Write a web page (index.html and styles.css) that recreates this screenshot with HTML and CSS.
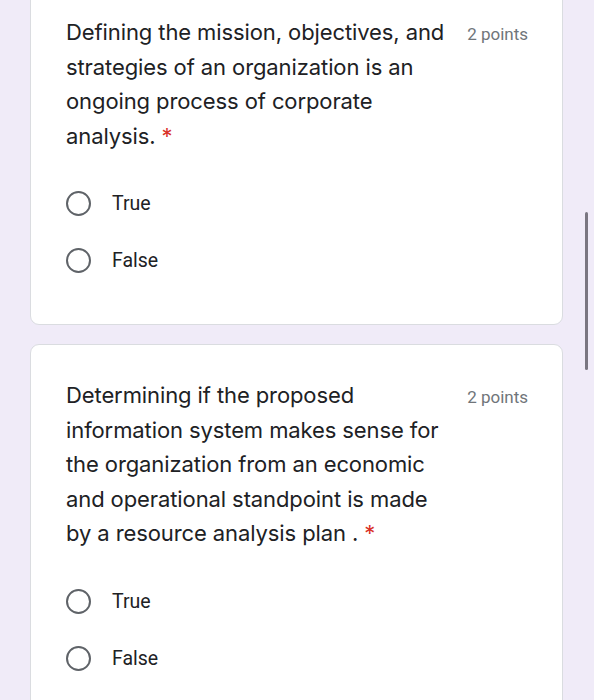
FILE: index.html
```html
<!DOCTYPE html>
<html>
<head>
<meta charset="utf-8">
<link rel="stylesheet" href="styles.css">
</head>
<body>
<div class="page">
  <div class="card card-first">
    <div class="head">
      <div class="title"><span class="qtext">Defining the mission, objectives, and strategies of an organization is an ongoing process of corporate analysis.</span>&nbsp;<span class="req">*</span></div>
      <div class="points">2 points</div>
    </div>
    <div class="options">
      <div class="option"><span class="radio"></span><span class="label">True</span></div>
      <div class="option"><span class="radio"></span><span class="label">False</span></div>
    </div>
  </div>
  <div class="card">
    <div class="head">
      <div class="title"><span class="qtext">Determining if the proposed information system makes sense for the organization from an economic and operational standpoint is made by a resource analysis plan .</span>&nbsp;<span class="req">*</span></div>
      <div class="points">2 points</div>
    </div>
    <div class="options">
      <div class="option"><span class="radio"></span><span class="label">True</span></div>
      <div class="option"><span class="radio"></span><span class="label">False</span></div>
    </div>
  </div>
</div>
<div class="scrollbar"></div>
</body>
</html>
```

FILE: styles.css
```css
html, body {
  margin: 0;
  padding: 0;
  background: #f0ebf8;
  overflow: hidden;
  height: 700px;
}
.page {
  display: flex;
  flex-direction: column;
  gap: 19px;
  padding: 0 31px 0 30px;
}
.card {
  background: #ffffff;
  border: 1px solid #dadce0;
  border-radius: 9px;
  padding: 33px 34px 35px 35px;
}
.card-first {
  margin-top: -19px;
}
.head {
  display: flex;
  align-items: flex-start;
}
.title {
  width: 386px;
  font-family: Inter, Roboto, sans-serif;
  font-size: 22px;
  line-height: 34.5px;
  color: #202124;
  letter-spacing: -0.1px;
}
.req {
  color: #d93025;
}
.points {
  margin-left: auto;
  font-family: Roboto, sans-serif;
  font-size: 17px;
  line-height: 34.5px;
  padding-top: 2px;
  color: #70757a;
}
.options {
  margin-top: 22px;
  display: flex;
  flex-direction: column;
}
.option {
  height: 57px;
  display: flex;
  align-items: center;
}
.radio {
  width: 21px;
  height: 21px;
  border: 2.5px solid #5f6368;
  border-radius: 50%;
  flex: none;
}
.label {
  margin-left: 21px;
  font-family: Roboto, sans-serif;
  font-size: 19.5px;
  color: #202124;
}
.scrollbar {
  position: absolute;
  left: 585px;
  top: 212px;
  width: 3px;
  height: 158px;
  border-radius: 2px;
  background: #7a7681;
}
```
